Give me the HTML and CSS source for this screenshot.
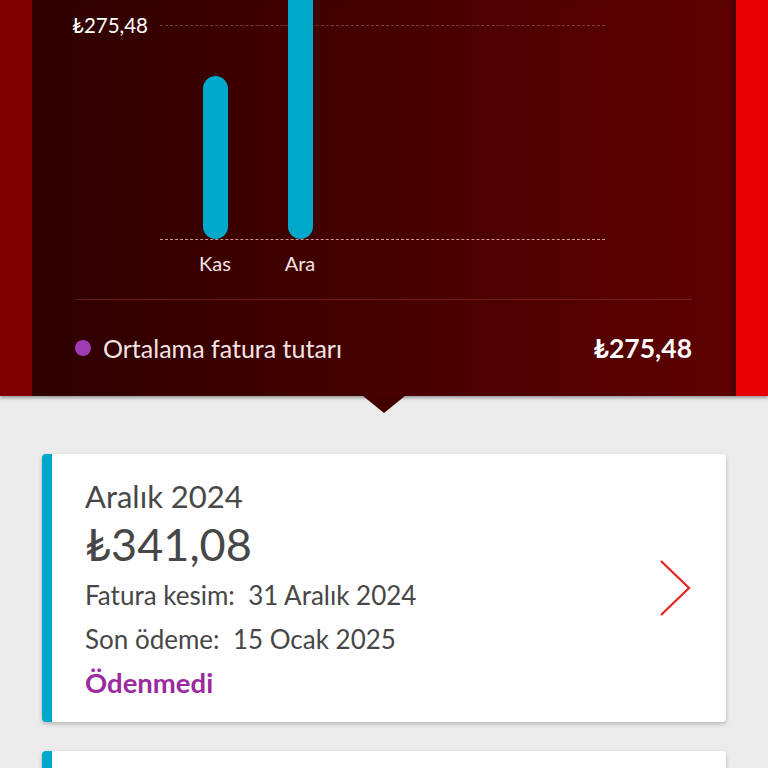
FILE: index.html
```html
<!DOCTYPE html>
<html lang="tr">
<head>
<meta charset="utf-8">
<title>Faturalar</title>
<link rel="stylesheet" href="styles.css">
</head>
<body>
<div class="hero">
  <div class="side side-left"></div>
  <div class="panel">
    <div class="chart">
      <div class="y-label">₺275,48</div>
      <div class="plot-wrap">
        <div class="plot">
          <div class="bar bar-kas"></div>
          <div class="bar bar-ara"></div>
        </div>
        <div class="x-labels">
          <span class="x-label">Kas</span>
          <span class="x-label">Ara</span>
        </div>
      </div>
    </div>
    <div class="separator"></div>
    <div class="legend">
      <span class="dot"></span>
      <span class="legend-text">Ortalama fatura tutarı</span>
      <span class="legend-value">₺275,48</span>
    </div>
  </div>
  <div class="side side-right"></div>
  <div class="pointer"></div>
</div>
<div class="list">
  <div class="card">
    <div class="card-body">
      <div class="card-month">Aralık 2024</div>
      <div class="card-amount">₺341,08</div>
      <div class="card-line">Fatura kesim:&nbsp; 31 Aralık 2024</div>
      <div class="card-line">Son ödeme:&nbsp; 15 Ocak 2025</div>
      <div class="card-status">Ödenmedi</div>
    </div>
    <svg class="chevron" width="34" height="58" viewBox="0 0 34 58">
      <path d="M2 2 L30 29 L2 56" fill="none" stroke="#e32222" stroke-width="2.2"/>
    </svg>
  </div>
  <div class="card card-next"></div>
</div>
</body>
</html>
```
FILE: styles.css
```css
* { box-sizing: border-box; }
html, body { margin: 0; padding: 0; }
body {
  background: #ebebeb;
  font-family: Lato, "Open Sans", sans-serif;
  overflow: hidden;
  height: 768px;
}
.hero {
  position: relative;
  display: flex;
  height: 396px;
  box-shadow: 0 2px 3px rgba(0,0,0,0.35);
  z-index: 2;
}
.side { width: 32px; flex: none; }
.side-left { background: #7e0000; }
.side-right { background: #e60000; }
.panel {
  flex: 1;
  background: linear-gradient(to right, #2e0000 0%, #460000 50%, #5e0000 100%);
  padding: 14px 44px 0 40px;
  box-shadow: inset -8px 0 6px -6px rgba(0,0,0,0.35);
}
.chart { display: flex; }
.y-label {
  width: 88px;
  flex: none;
  color: #fff;
  font-size: 20.5px;
  line-height: 22px;
}
.plot-wrap { width: 445px; }
.plot {
  margin-top: 11px;
  height: 215px;
  border-top: 1px dashed rgba(255, 190, 190, 0.3);
  border-bottom: 1px dashed rgba(255, 200, 200, 0.75);
  display: flex;
  align-items: flex-end;
  gap: 60px;
  padding-left: 43px;
}
.bar {
  width: 25px;
  background: #00a9cc;
  border-radius: 13px;
}
.bar-kas { height: 163px; }
.bar-ara { height: 270px; border-radius: 0 0 13px 13px; }
.x-labels {
  display: flex;
  gap: 35px;
  padding-left: 30px;
  margin-top: 12px;
}
.x-label {
  width: 50px;
  text-align: center;
  color: #f4e4e4;
  font-size: 20px;
  line-height: 22px;
}
.separator {
  margin: 25px 0 0 3px;
  height: 1px;
  background: rgba(255, 120, 120, 0.22);
}
.legend {
  display: flex;
  align-items: center;
  margin-top: 33px;
  height: 30px;
}
.dot {
  width: 16px;
  height: 16px;
  border-radius: 50%;
  background: #a03cb4;
  margin-left: 3px;
  margin-right: 12px;
}
.legend-text {
  flex: 1;
  color: #f4e4e4;
  font-size: 25px;
}
.legend-value {
  color: #fff;
  font-weight: 700;
  font-size: 26.5px;
}
.pointer {
  position: absolute;
  left: 363px;
  top: 396px;
  width: 0;
  height: 0;
  border-left: 21px solid transparent;
  border-right: 21px solid transparent;
  border-top: 17px solid #420000;
}
.list {
  padding: 58px 42px 0 42px;
  display: flex;
  flex-direction: column;
  gap: 29px;
}
.card {
  display: flex;
  align-items: flex-start;
  background: #fff;
  border-left: 10px solid #00a9c9;
  border-radius: 4px;
  box-shadow: 0 2px 4px rgba(0,0,0,0.22);
  height: 268px;
  padding: 22px 33px 0 33px;
  flex: none;
}
.card-body { flex: 1; color: #474747; }
.card-month { font-size: 31px; line-height: 40px; }
.card-amount { font-size: 45px; line-height: 57px; }
.card-line { font-size: 26px; line-height: 44px; }
.card-status {
  font-size: 27.5px;
  line-height: 44px;
  font-weight: 700;
  color: #9b2aa0;
}
.chevron { flex: none; align-self: center; margin-top: -22px; }
```
